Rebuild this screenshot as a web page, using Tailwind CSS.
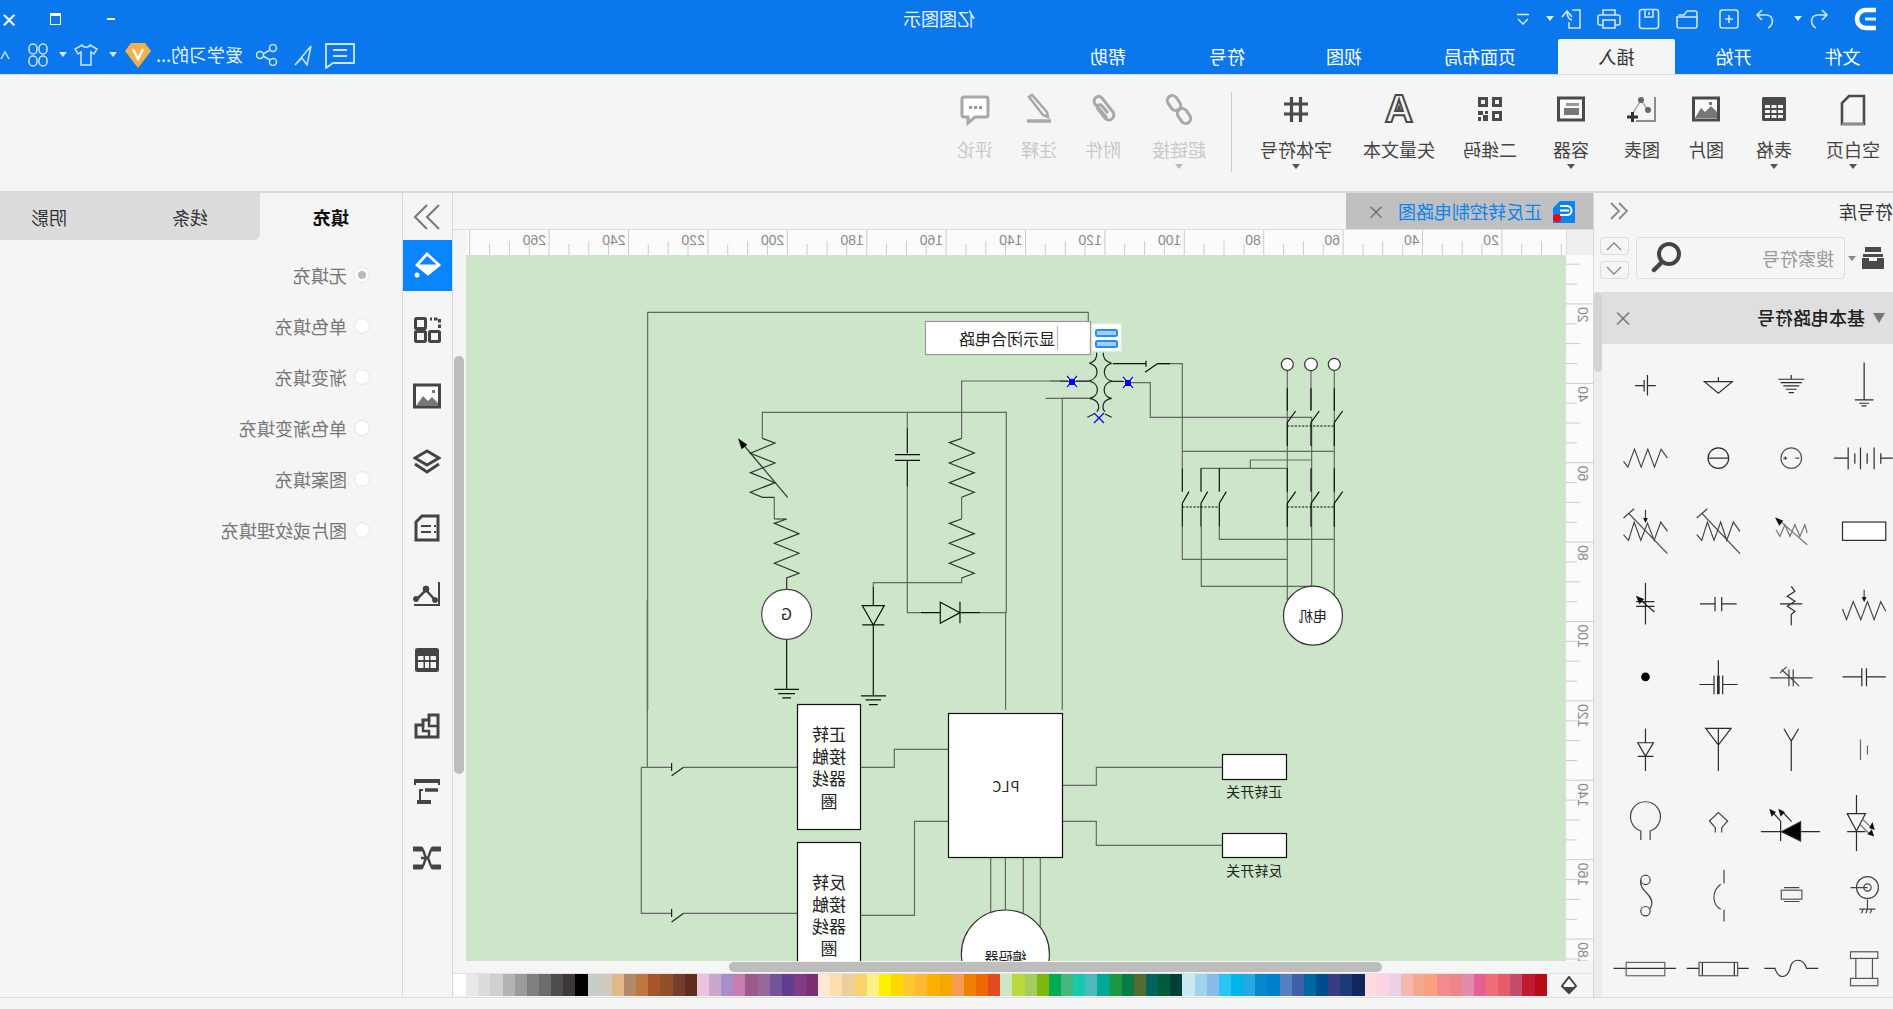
<!DOCTYPE html>
<html lang="zh-CN">
<head>
  <meta charset="UTF-8" />
  <title>亿图图示</title>
  <script src="https://cdn.jsdelivr.net/npm/@tailwindcss/browser@4"></script>
</head>
<body class="overflow-hidden bg-[#f5f5f5]">
<!-- the whole window is shown mirrored, so the DOM is written in normal reading order -->
<div class="-scale-x-100 w-[1893px] h-[1009px] flex flex-col overflow-hidden bg-[#f5f5f5] text-[#444] font-['Noto_Sans_CJK_SC',sans-serif]">

  <!-- title bar -->
  <header class="h-[74px] bg-[#0a78ec] text-white flex flex-col shrink-0">
    <div class="h-[37px] flex items-center pl-[17px]">
      <svg class="-scale-x-100 w-[22px] h-[24px] shrink-0" viewBox="0 0 22 24" fill="none" stroke="#fff"><path d="M22 3H12a9 9 0 0 0 0 18H22" stroke-width="4.5"/><path d="M11 12H22" stroke-width="3" stroke="#dcecff"/></svg>
      <svg class="-scale-x-100 ml-[24px] w-[22px] h-[22px] shrink-0" viewBox="0 0 22 22" fill="none" stroke="#cfe3fb" stroke-width="1.6"><path d="M8 20C2 17 2 8 9 7H19M14 2L19 7L14 12"/></svg>
      <svg class="ml-[6px] w-[8px] h-[5px] shrink-0" viewBox="0 0 8 5" fill="#dcecff"><path d="M0 0H8L4 5Z"/></svg>
      <svg class="-scale-x-100 ml-[18px] w-[22px] h-[22px] shrink-0" viewBox="0 0 22 22" fill="none" stroke="#cfe3fb" stroke-width="1.6"><path d="M14 20C20 17 20 8 13 7H3M8 2L3 7L8 12"/></svg>
      <svg class="ml-[14px] w-[22px] h-[22px] shrink-0" viewBox="0 0 22 22" fill="none" stroke="#cfe3fb" stroke-width="1.6"><rect x="2" y="2" width="18" height="18" rx="2.5"/><path d="M7 11H15M11 7V15"/></svg>
      <svg class="-scale-x-100 ml-[19px] w-[24px] h-[22px] shrink-0" viewBox="0 0 24 22" fill="none" stroke="#cfe3fb" stroke-width="1.6"><path d="M2 8V18a2 2 0 0 0 2 2H20a2 2 0 0 0 2-2V5a2 2 0 0 0-2-2H12L9 7H3"/><path d="M2 9H22"/></svg>
      <svg class="ml-[15px] w-[22px] h-[22px] shrink-0" viewBox="0 0 22 22" fill="none" stroke="#cfe3fb" stroke-width="1.6"><rect x="1.5" y="1.5" width="19" height="19" rx="2.5"/><path d="M7 2V9H15V2M11 4V7"/></svg>
      <svg class="ml-[17px] w-[24px] h-[22px] shrink-0" viewBox="0 0 24 22" fill="none" stroke="#cfe3fb" stroke-width="1.6"><path d="M6 7V2H18V7M6 17H3a2 2 0 0 1-2-2V9a2 2 0 0 1 2-2H21a2 2 0 0 1 2 2V15a2 2 0 0 1-2 2H18"/><rect x="6" y="12" width="12" height="8"/></svg>
      <svg class="-scale-x-100 ml-[15px] w-[22px] h-[22px] shrink-0" viewBox="0 0 22 22" fill="none" stroke="#cfe3fb" stroke-width="1.6"><path d="M12 2H20V20H9V14M2 9L7 3L12 9M7 3C7 8 8 11 12 12"/></svg>
      <svg class="ml-[6px] w-[8px] h-[5px] shrink-0" viewBox="0 0 8 5" fill="#dcecff"><path d="M0 0H8L4 5Z"/></svg>
      <svg class="ml-[17px] w-[12px] h-[12px] shrink-0" viewBox="0 0 12 12" fill="none" stroke="#dcecff" stroke-width="1.4"><path d="M0 1.5H12M1 6L6 11L11 6"/></svg>
      <div class="flex-1 text-center pr-[226px] text-[18px] text-[#e8f2ff]">亿图图示</div>
      <div class="w-[135px] flex items-center shrink-0">
        <div class="w-[54px] flex justify-center"><div class="w-[8px] h-[2px] bg-white"></div></div>
        <div class="w-[73px] flex justify-center"><div class="w-[11px] h-[12px] border border-white border-t-[3px]"></div></div>
        <div class="flex-1 pl-[5px] text-[18px] leading-none font-bold">×</div>
      </div>
    </div>
    <div class="h-[37px] flex items-end">
      <div class="w-[101px] h-[35px] flex items-center justify-center text-[18px]">文件</div>
      <div class="w-[117px] h-[35px] flex items-center justify-center text-[18px]">开始</div>
      <div class="w-[117px] h-[35px] flex items-center justify-center text-[18px] bg-[#f5f5f5] text-[#333] rounded-t-[2px]">插入</div>
      <div class="w-[156px] h-[35px] flex items-center justify-center text-[18px]">页面布局</div>
      <div class="w-[116px] h-[35px] flex items-center justify-center text-[18px]">视图</div>
      <div class="w-[118px] h-[35px] flex items-center justify-center text-[18px]">符号</div>
      <div class="w-[120px] h-[35px] flex items-center justify-center text-[18px]">帮助</div>
      <div class="ml-auto h-[37px] flex items-center pb-[2px]">
        <svg class="-scale-x-100 w-[30px] h-[28px]" viewBox="0 0 30 28" fill="none" stroke="#cfe3fb" stroke-width="1.8"><path d="M1 3H29V22H8L1 27Z"/><path d="M8 9H22M8 15H22"/></svg>
        <svg class="-scale-x-100 ml-[12px] w-[20px] h-[22px]" viewBox="0 0 20 22" fill="none" stroke="#cfe3fb" stroke-width="1.5"><path d="M2 21L18 2L14 21L9 14Z"/></svg>
        <svg class="ml-[15px] w-[22px] h-[22px]" viewBox="0 0 22 22" fill="none" stroke="#cfe3fb" stroke-width="1.5"><circle cx="5" cy="4" r="3.5"/><circle cx="18" cy="11" r="3.5"/><circle cx="5" cy="18" r="3.5"/><path d="M8 6L15 10M8 16L15 12"/></svg>
        <div class="ml-[13px] w-[86px] text-[18px] whitespace-nowrap text-[#eaf3ff]">爱学习的...</div>
        <svg class="ml-[6px] w-[26px] h-[26px]" viewBox="0 0 26 26"><path d="M6 1H20L26 9L13 26L0 9Z" fill="#f5b04a"/><path d="M8 7L13 17L18 7" fill="none" stroke="#fff" stroke-width="2.5"/></svg>
        <svg class="ml-[8px] w-[8px] h-[5px]" viewBox="0 0 8 5" fill="#dcecff"><path d="M0 0H8L4 5Z"/></svg>
        <svg class="ml-[11px] w-[24px] h-[24px]" viewBox="0 0 24 24" fill="none" stroke="#cfe3fb" stroke-width="1.5"><path d="M8 2L1 6L4 11L7 9V22H17V9L20 11L23 6L16 2C15 5 9 5 8 2Z"/></svg>
        <svg class="ml-[7px] w-[8px] h-[5px]" viewBox="0 0 8 5" fill="#dcecff"><path d="M0 0H8L4 5Z"/></svg>
        <svg class="ml-[11px] w-[20px] h-[24px]" viewBox="0 0 20 24" fill="none" stroke="#cfe3fb" stroke-width="1.5"><rect x="1" y="1" width="8" height="10" rx="4"/><rect x="11" y="1" width="8" height="10" rx="4"/><rect x="1" y="13" width="8" height="10" rx="4"/><rect x="11" y="13" width="8" height="10" rx="4"/></svg>
        <svg class="ml-[18px] w-[10px] h-[12px]" viewBox="0 0 10 12" fill="none" stroke="#cfe3fb" stroke-width="1.5"><path d="M1 10L5 3L9 10"/></svg>
      </div>
    </div>
  </header>

  <!-- ribbon -->
  <section class="h-[119px] shrink-0 flex border-t border-b-2 border-t-[#dcdcdc] border-b-[#d9d9d9] text-[18px] leading-[24px] text-[#444]">
    <div class="w-[80px] flex flex-col items-center pt-[17px]">
      <svg class="-scale-x-100 w-[26px] h-[34px]" viewBox="0 0 26 34" fill="none" stroke="#4a4a4a" stroke-width="2.6"><path d="M9 4H24V32H2V11Z"/><path d="M2 32H24" stroke="#8c8c8c"/></svg>
      <span class="mt-[11px]">空白页</span><svg class="mt-[3px] w-[8px] h-[5px]" viewBox="0 0 8 5" fill="#555"><path d="M0 0H8L4 5Z"/></svg>
    </div>
    <div class="w-[78px] flex flex-col items-center pt-[17px]">
      <svg class="w-[26px] h-[34px]" viewBox="0 0 26 34"><rect x="1" y="5" width="24" height="24" rx="1.5" fill="#4a4a4a"/><path d="M4 13H9V16H4ZM10.500 13H15.500V16H10.500ZM17 13H22V16H17ZM4 18H9V21H4ZM10.500 18H15.500V21H10.500ZM17 18H22V21H17ZM4 23H9V26H4ZM10.500 23H15.500V26H10.500ZM17 23H22V26H17Z" fill="#f5f5f5"/></svg>
      <span class="mt-[11px]">表格</span><svg class="mt-[3px] w-[8px] h-[5px]" viewBox="0 0 8 5" fill="#555"><path d="M0 0H8L4 5Z"/></svg>
    </div>
    <div class="w-[58px] flex flex-col items-center pt-[17px]">
      <svg class="-scale-x-100 w-[28px] h-[34px]" viewBox="0 0 28 34"><rect x="1.500" y="6" width="25" height="22" fill="#fafafa" stroke="#4a4a4a" stroke-width="3"/><path d="M3 26L9 16L13 20L19 14L25 20V26Z" fill="#777"/><rect x="17" y="10" width="3" height="3" fill="#777"/></svg>
      <span class="mt-[11px]">图片</span>
    </div>
    <div class="w-[70px] flex flex-col items-center pt-[17px]">
      <svg class="-scale-x-100 w-[32px] h-[34px]" viewBox="0 0 32 34" fill="none"><path d="M29 5V29H10" stroke="#8c8c8c" stroke-width="2"/><path d="M7 21L15 8L22 18" stroke="#aaa" stroke-width="1.5"/><circle cx="15" cy="8" r="3" fill="#666"/><circle cx="22" cy="18" r="3" fill="#666"/><path d="M1 25H12M6.500 20V30" stroke="#333" stroke-width="3"/></svg>
      <span class="mt-[11px]">图表</span>
    </div>
    <div class="w-[72px] flex flex-col items-center pt-[17px]">
      <svg class="-scale-x-100 w-[28px] h-[34px]" viewBox="0 0 28 34"><rect x="1.500" y="6" width="25" height="22" fill="#fafafa" stroke="#4a4a4a" stroke-width="3"/><rect x="7" y="16" width="15" height="7" fill="#777"/><rect x="9" y="11" width="13" height="3" fill="#999"/></svg>
      <span class="mt-[11px]">容器</span><svg class="mt-[3px] w-[8px] h-[5px]" viewBox="0 0 8 5" fill="#555"><path d="M0 0H8L4 5Z"/></svg>
    </div>
    <div class="w-[90px] flex flex-col items-center pt-[17px]">
      <svg class="-scale-x-100 w-[26px] h-[34px]" viewBox="0 0 26 34"><path d="M1 5H11V15H1ZM15 5H25V15H15ZM15 19H25V29H15ZM1 19H6V23H1ZM6 23H11V29H6ZM1 25H4V29H1ZM8 19H11V22H8Z" fill="#4a4a4a"/><path d="M4 8H8V12H4ZM18 8H22V12H18ZM18 22H22V26H18Z" fill="#f5f5f5"/></svg>
      <span class="mt-[11px]">二维码</span>
    </div>
    <div class="w-[92px] flex flex-col items-center pt-[17px]">
      <svg class="w-[36px] h-[34px] overflow-visible" viewBox="0 0 36 34"><text x="18" y="30" text-anchor="middle" font-family="Liberation Sans" font-weight="700" font-size="39" fill="#f5f5f5" stroke="#4a4a4a" stroke-width="2">A</text><path d="M18 12L21 20H15Z" fill="#4a4a4a"/></svg>
      <span class="mt-[11px] whitespace-nowrap">矢量文本</span>
    </div>
    <div class="w-[114px] flex flex-col items-center pt-[17px]">
      <svg class="w-[26px] h-[34px]" viewBox="0 0 26 34" fill="none" stroke="#4a4a4a" stroke-width="3.2"><path d="M1 12H25M1 22H25M8.500 5V30M17.500 5V30"/></svg>
      <span class="mt-[11px] whitespace-nowrap">字体符号</span><svg class="mt-[3px] w-[8px] h-[5px]" viewBox="0 0 8 5" fill="#555"><path d="M0 0H8L4 5Z"/></svg>
    </div>
    <div class="w-[8px] flex items-center justify-end"><div class="w-px h-[80px] bg-[#ccc] mt-[-3px]"></div></div>
    <div class="w-[104px] flex flex-col items-center pt-[17px] text-[#c8c8c8]">
      <svg class="-scale-x-100 w-[30px] h-[34px]" viewBox="0 0 30 34" fill="none" stroke="#a8a8a8" stroke-width="3"><rect x="-8" y="-5" width="16" height="10" rx="5" transform="translate(10 11) rotate(55)"/><rect x="-8" y="-5" width="16" height="10" rx="5" transform="translate(20 24) rotate(55)"/></svg>
      <span class="mt-[11px] whitespace-nowrap">超链接</span><svg class="mt-[3px] w-[8px] h-[5px]" viewBox="0 0 8 5" fill="#bbb"><path d="M0 0H8L4 5Z"/></svg>
    </div>
    <div class="w-[48px] flex flex-col items-center pt-[17px] text-[#c8c8c8]">
      <svg class="-scale-x-100 w-[30px] h-[34px]" viewBox="0 0 30 34" fill="none" stroke="#a8a8a8" stroke-width="3"><path d="M19 26L7 12C4 7 10 2 14 6L25 20C28 26 21 31 17 26L10 17C8 14 12 11 14 14L20 21"/></svg>
      <span class="mt-[11px]">附件</span>
    </div>
    <div class="w-[80px] flex flex-col items-center pt-[17px] text-[#c8c8c8]">
      <svg class="-scale-x-100 w-[30px] h-[34px]" viewBox="0 0 30 34" fill="none" stroke="#a8a8a8"><path d="M5 5L8 3L23 20L24 25L19 23Z" stroke-width="2.5"/><path d="M3 29H27" stroke-width="3.5"/></svg>
      <span class="mt-[11px]">注释</span>
    </div>
    <div class="w-[48px] flex flex-col items-center pt-[17px] text-[#c8c8c8]">
      <svg class="-scale-x-100 w-[30px] h-[34px]" viewBox="0 0 30 34"><path d="M4 5H26a2 2 0 0 1 2 2V23a2 2 0 0 1-2 2H15L8 31V25H4a2 2 0 0 1-2-2V7a2 2 0 0 1 2-2Z" fill="#fff" stroke="#a8a8a8" stroke-width="3"/><path d="M9 14H12V17H9ZM14 14H17V17H14ZM19 14H22V17H19Z" fill="#999"/></svg>
      <span class="mt-[11px]">评论</span>
    </div>
  </section>

  <main class="flex-1 flex min-h-0">

    <!-- symbol library -->
    <aside class="w-[300px] shrink-0 border-r border-[#d9d9d9] flex flex-col">
      <div class="h-[36px] flex items-center justify-between pr-[15px] text-[18px] text-[#333]">
        <span>符号库</span>
        <svg class="w-[20px] h-[20px]" viewBox="0 0 20 20" fill="none" stroke="#888" stroke-width="1.800"><path d="M10 2L2 10L10 18M18 2L10 10L18 18"/></svg>
      </div>
      <div class="h-[63px] flex items-start pt-[8px] pl-[9px]">
        <svg class="w-[22px] h-[24px] mt-[9px]" viewBox="0 0 22 24"><path d="M3 1H19V6H3ZM1 8H21V11H1ZM0 12H7V15H15V12H22V23H0Z" fill="#4a4a4a"/></svg>
        <svg class="ml-[6px] mt-[19px] w-[8px] h-[5px]" viewBox="0 0 8 5" fill="#888"><path d="M0 0H8L4 5Z"/></svg>
        <div class="ml-[3px] w-[209px] h-[42px] border border-[#ddd] rounded-[3px] flex items-center justify-between pl-[10px] pr-[14px] text-[18px] text-[#999]">
          <span>搜索符号</span>
          <svg class="-scale-x-100 w-[32px] h-[32px]" viewBox="0 0 32 32" fill="none" stroke="#444"><circle cx="18" cy="12" r="10" stroke-width="4"/><path d="M11 20L3 28" stroke-width="4.500" stroke-linecap="round"/></svg>
        </div>
        <div class="ml-[7px] flex flex-col gap-[6px]">
          <div class="w-[29px] h-[18px] border border-[#ddd] rounded-[3px] flex items-center justify-center"><svg class="w-[16px] h-[9px]" viewBox="0 0 16 9" fill="none" stroke="#888" stroke-width="1.300"><path d="M1 8L8 1L15 8"/></svg></div>
          <div class="w-[29px] h-[18px] border border-[#ddd] rounded-[3px] flex items-center justify-center"><svg class="w-[16px] h-[9px]" viewBox="0 0 16 9" fill="none" stroke="#888" stroke-width="1.300"><path d="M1 1L8 8L15 1"/></svg></div>
        </div>
      </div>
      <div class="flex-1 flex min-h-0">
        <div class="w-[291px] flex flex-col">
          <div class="h-[52px] bg-[#dfdfdf] flex items-center pl-[8px] pr-[11px] text-[18px] text-[#222]">
            <svg class="w-[12px] h-[10px]" viewBox="0 0 12 10" fill="#777"><path d="M0 0H12L6 10Z"/></svg>
            <span class="ml-[8px] font-medium">基本电路符号</span>
            <span class="ml-auto text-[#777] text-[20px]">×</span>
          </div>
          <svg class="-scale-x-100 block" width="291" height="654" viewBox="1602 344 291 654" fill="none" stroke="#2b2b2b" stroke-width="1.200">
            <g transform="translate(1590 190) scale(.3333)" stroke-width="3.600">
              <path d="M823 518V630M795 630H851M808 640H838M815 648H830"/>
              <path d="M604 555V568M565 568H643M572 578H636M580 588H628M588 598H620M596 608H612"/>
              <path d="M385 562V575M343 575H427L385 610Z"/>
              <path d="M135 587H162M162 570V605M172 555V617M172 587H197"/>
              <path d="M732 805H775M775 773V838M795 790V822M812 773V838M832 790V822M853 773V838M873 790V822M873 805H909"/>
              <circle cx="604" cy="805" r="31" stroke="#555"/><path d="M580 805H592M586 800V810M616 805H628" stroke-width="3"/>
              <circle cx="385" cy="805" r="31"/><path d="M354 805H416"/>
              <path d="M100 815L113 832L133 778L153 832L173 778L193 832L213 778L232 805" stroke="#444"/>
              <rect x="758" y="997" width="130" height="55" fill="#fff"/>
              <path d="M558 1020L570 1040L585 1005L600 1040L615 1005L630 1040L645 1005L652 1030M560 985L652 1065" stroke="#777"/><path d="M555 983L580 993L568 1008Z" fill="#111" stroke="none"/>
              <path d="M320 1035L335 1052L352 997L372 1052L392 997L410 1052L430 997L450 1025M335 970L450 1092M320 985L352 957" stroke="#444"/>
              <path d="M100 1035L115 1052L132 997L152 1052L172 1000L192 1052L212 997L232 1025M115 970L232 1092M100 985L132 957M166 960V990" stroke="#444"/><path d="M159 985H173L166 1000Z" fill="#111" stroke="none"/>
            </g>
            <g transform="translate(1590 590) scale(.3333)" stroke-width="3.600">
              <path d="M758 58L770 90L790 36L813 90L833 36L853 90L873 36L888 65M823 0V25" stroke="#444"/><path d="M816 22H830L823 38Z" fill="#111" stroke="none"/>
              <path d="M604 -10L615 5L592 20L615 35L592 50L615 65L604 75V107M570 43H637"/>
              <path d="M330 43H375M375 22V65M395 22V65M395 43H440"/>
              <path d="M166 -20V105M138 36H193M138 50H193M193 67L145 26"/><path d="M137 18L162 28L148 44Z" fill="#111" stroke="none"/>
              <path d="M758 262H816M816 236V290M830 236V290M830 262H888"/>
              <path d="M540 265H668M597 240V290M610 240V290M575 240L628 290M570 250L590 232" stroke="#444"/>
              <path d="M385 212V258M372 258V314M398 258V314M328 285H372M398 285H443"/><path d="M385 258V314" stroke-width="8"/>
              <circle cx="166" cy="262" r="13" fill="#000" stroke="none"/>
              <path d="M812 450V512M833 468V495" stroke="#666"/>
              <path d="M604 450V545M582 418L604 455L626 418"/>
              <path d="M347 417H423L385 467ZM385 417V545"/>
              <path d="M166 418V460M143 460H190L166 500ZM143 501H190M166 501V545"/>
              <path d="M800 617V672M772 673H827L800 725ZM772 727H827M800 727V785"/><path d="M818 690L842 712M810 705L840 735" stroke="#777"/><path d="M855 722L838 716L848 698ZM853 742L833 735L846 720Z" fill="#111" stroke="none"/>
              <path d="M513 727H690M572 695V755M572 695L545 665M605 697L575 665" stroke-width="3.600"/><path d="M632 697V755L575 727Z" fill="#000"/><path d="M538 658L558 668L545 682ZM565 658L585 668L572 682Z" fill="#111" stroke="none"/>
              <path d="M152 752V725A45 45 0 1 1 180 725V752" stroke="#444"/>
              <path d="M376 730V715L358 695L385 670L413 695L395 715V730" stroke="#444"/>
              <circle cx="833" cy="895" r="33" stroke="#444"/><circle cx="833" cy="895" r="11" stroke="#444"/><path d="M782 895H833M833 930V958M808 960H857M820 960L815 972M833 960L828 972M846 960L841 972" stroke="#444"/>
              <rect x="574" y="903" width="62" height="27" stroke="#555"/><path d="M582 895H628M582 937H628" stroke="#444"/>
              <path d="M402 842V882M392 885C360 910 370 950 392 960M402 962V997" stroke="#444"/>
              <circle cx="166" cy="872" r="14" stroke="#444"/><circle cx="166" cy="966" r="14" stroke="#444"/><path d="M152 872C145 905 190 915 185 945C183 955 180 960 176 958" stroke="#444"/>
              <rect x="782" y="1088" width="82" height="20" stroke="#555"/><rect x="782" y="1168" width="82" height="22" stroke="#555"/><path d="M798 1108V1168M848 1108V1168" stroke="#555"/>
              <path d="M523 1138H555C565 1170 590 1170 600 1140C605 1105 640 1105 650 1138H685" stroke="#333"/>
              <path d="M290 1138H327M443 1138H476M337 1120V1160M433 1120V1160"/><rect x="327" y="1120" width="116" height="40" stroke="#555"/>
              <path d="M70 1138H258" stroke="#333"/><rect x="108" y="1120" width="116" height="40" stroke="#666"/>
            </g>
          </svg>
        </div>
        <div class="w-[8px] bg-[#ececec]"><div class="h-[80px] rounded-[4px] bg-[#d4d4d4]"></div></div>
      </div>
    </aside>

    <!-- canvas column -->
    <section class="w-[1140px] shrink-0 flex flex-col">
      <div class="h-[36px] flex shrink-0">
        <div class="w-[247px] bg-[#c0c0c0] flex items-center pl-[18px] text-[18px] text-[#0a84f0]">
          <svg class="w-[22px] h-[24px]" viewBox="0 0 22 24"><path d="M0 2H15L22 9V24H0Z" fill="#0a84f0"/><path d="M15 7H8a4 4 0 0 0 0 9H15M6 11.500H15" fill="none" stroke="#fff" stroke-width="2"/><circle cx="18" cy="19" r="4" fill="#f00"/></svg>
          <span class="ml-[11px] whitespace-nowrap">正反转控制电路图</span>
          <span class="ml-[13px] text-[#666] text-[18px]">×</span>
        </div>
      </div>
      <div class="h-[26px] flex shrink-0 border-t border-[#ddd]">
        <div class="w-[27px] shrink-0 bg-[#efefef] border-r border-[#ddd]"></div>
        <svg id="h-ruler" class="block shrink-0 bg-[#fbfbfb]" width="1100" height="25" viewBox="0 0 1100 25"></svg>
      </div>
      <div class="h-[706px] flex shrink-0">
        <svg id="v-ruler" class="block bg-[#fbfbfb] shrink-0" width="27" height="706" viewBox="0 0 27 706"></svg>
        <svg class="-scale-x-100 block bg-[#cde5c8] shrink-0" width="1100" height="706" viewBox="466 255 1100 706" fill="none" stroke="#666" stroke-width="1.200">
          <!-- wires, left half of the drawing -->
          <g transform="translate(600 290) scale(.3333)" stroke-width="3.600">
            <path d="M143 1260V67H1465V95"/>
            <path d="M487 445V367H1219V968H1140M1217 968V1260"/>
            <path d="M922 367V415M922 590V968H963M1085 445V273H1465M1387 1260V325H1465"/>
            <path d="M1085 622V687M1085 864V878H820V890M523 622V687"/>
            <g stroke="#333">
              <path d="M487 445L525 459L451 490L525 519L451 548L525 578L451 607L487 622H523M523 687H560L523 700L597 731L523 760L597 790L523 820L597 850L560 864V898"/>
              <path d="M1085 445L1048 458L1123 489L1048 519L1123 548L1048 578L1123 607L1085 622M1085 687L1048 700L1123 731L1048 760L1123 790L1048 820L1123 850L1085 864"/>
              <path d="M563 622L428 462"/>
            </g>
            <path d="M414 445L442 464L425 478Z" fill="#000" stroke="none"/>
            <g stroke="#111">
              <path d="M922 415V490M885 494H960M885 511H960M922 511V590"/>
              <path d="M820 890V947M787 947H853L820 1005ZM787 1005H853M820 1005V1218M783 1218H858M797 1230H843M807 1244H833"/>
              <path d="M963 968H1021M1021 937V1000L1080 968ZM1080 935V1000M1080 968H1140"/>
              <path d="M560 1048V1198M523 1198H597M535 1211H585M547 1224H573"/>
            </g>
            <circle cx="560" cy="973" r="75" fill="#fff" stroke="#444"/>
          </g>
          <!-- power circuit, right half -->
          <g transform="translate(1050 290) scale(.3333)" stroke-width="3.600">
            <path d="M322 221H397V535M235 278H301V382H785V888M397 484H853M453 535H712M601 535V510H785M712 241V930M853 241V915M508 710V748H853M397 710V808H712M454 710V889H785M783 241V360"/>
            <g stroke="#111">
              <path d="M188 221H288M288 212V230M285 247L322 221M322 221H360"/>
              <path d="M712 295V362M783 295V362M853 295V362M712 397L737 363M783 397L808 363M853 397L878 363M712 397V468M783 397V468M853 397V468"/>
              <path d="M712 408H853" stroke-dasharray="7 4"/>
              <path d="M712 535V605M783 535V605M853 535V605M712 640L737 605M783 640L808 605M853 640L878 605M712 640V710M783 640V710M853 640V710"/>
              <path d="M712 651H853" stroke-dasharray="7 4"/>
              <path d="M397 535V605M453 535V605M508 535V605M397 640L417 605M453 640L473 605M508 640L529 605M397 640V710M453 640V710M508 640V710"/>
              <path d="M397 651H508" stroke-dasharray="7 4"/>
            </g>
            <g fill="#fff" stroke="#333">
              <circle cx="712" cy="223" r="18"/><circle cx="783" cy="223" r="19"/><circle cx="853" cy="223" r="18"/>
              <circle cx="789" cy="977" r="88.500"/>
            </g>
            <!-- transformer coils -->
            <path d="M118 220C150 225 150 268 112 274H30M118 325C150 320 150 280 120 274M118 220C135 215 142 205 140 188M118 325C150 330 150 355 140 365M112 382L132 372" stroke="#222" />
            <path d="M185 220C155 225 155 268 188 274H235M185 325C155 320 155 280 185 274M185 220C168 215 158 205 160 188M185 325C155 330 155 355 165 365M165 372L185 382" stroke="#222"/>
            <path d="M0 273H112M-13 325H118" stroke="#666"/>
          </g>
          <!-- control circuit -->
          <path d="M647.300 767.300V600M641.300 767.300H671.600M683.600 767.300H797.400M641.300 767.300V913.300H671.600M683.600 913.300H797.400"/>
          <path d="M671.600 763V771M671.600 909V917M671.600 775.700L683.600 767.300M671.600 922L683.600 913.300" stroke="#222"/>
          <path d="M860.300 767.300H894.300V749.300H948.500M860.300 915.300H914.500V821.300H948.500M1062.400 785.300H1096.300V767.300H1222M1062.400 821.300H1096.300V845.300H1222"/>
          <path d="M990.700 857V913M1005.400 857V911M1023.300 857V913M1040.300 857V926"/>
          <g fill="#fff" stroke="#111">
            <rect x="797.500" y="704.500" width="63" height="125"/>
            <rect x="797.500" y="842.500" width="63" height="140"/>
            <rect x="948.500" y="713.500" width="114" height="144"/>
            <rect x="1222.500" y="754.500" width="64" height="25"/>
            <rect x="1222.500" y="833.500" width="64" height="24"/>
          </g>
          <circle cx="1005.400" cy="954" r="44" fill="#fff" stroke="#333"/>
          <!-- selected text box and handles -->
          <rect x="925.500" y="321.500" width="165" height="33" fill="#fff" stroke="#999"/>
          <path d="M1057.500 326V350" stroke="#bbb"/>
          <rect x="1092" y="324" width="29" height="27" fill="#fff" stroke="#eee"/>
          <g fill="#a8cdf5" stroke="#1e90ff" stroke-width="2">
            <rect x="1096" y="330" width="21" height="6" rx="1.500"/><rect x="1096" y="341" width="21" height="6" rx="1.500"/>
          </g>
          <g stroke="#fff" stroke-width="3">
            <path d="M1067 377L1077 387M1077 377L1067 387M1123 378L1133 388M1133 378L1123 388"/>
          </g>
          <path d="M1067 376L1077 387M1077 376L1067 387M1123 377L1133 388M1133 377L1123 388M1094 413L1104 423M1104 413L1094 423" stroke="#00f"/>
          <path d="M1069 379H1075V385H1069ZM1125 380H1131V386H1125Z" fill="#00f" stroke="none"/>
          <!-- labels -->
          <g fill="#222" stroke="none" text-anchor="middle" font-size="16">
            <text transform="translate(1007 345) scale(-1 1)">显示闭合电路</text>
            <text transform="translate(786.500 620) scale(-1 1)" font-size="16">G</text>
            <text transform="translate(1313 621) scale(-1 1)" font-size="14">电机</text>
            <text transform="translate(1005.400 792) scale(-1 1)" font-size="14" letter-spacing="1">PLC</text>
            <text transform="translate(829 741) scale(-1 1)" font-size="17">正转</text>
            <text transform="translate(829 763) scale(-1 1)" font-size="17">接触</text>
            <text transform="translate(829 785) scale(-1 1)" font-size="17">器线</text>
            <text transform="translate(829 808) scale(-1 1)" font-size="17">圈</text>
            <text transform="translate(829 889) scale(-1 1)" font-size="17">反转</text>
            <text transform="translate(829 911) scale(-1 1)" font-size="17">接触</text>
            <text transform="translate(829 933) scale(-1 1)" font-size="17">器线</text>
            <text transform="translate(829 955) scale(-1 1)" font-size="17">圈</text>
            <text transform="translate(1005.400 962) scale(-1 1)" font-size="14">编码器</text>
            <text transform="translate(1254.300 797) scale(-1 1)" font-size="14">正转开关</text>
            <text transform="translate(1254.300 876) scale(-1 1)" font-size="14">反转开关</text>
          </g>
        </svg>
        <div class="flex-1 bg-[#f5f5f5] pl-[2px] pt-[101px]"><div class="w-[10px] h-[418px] rounded-[5px] bg-[#bdbdbd]"></div></div>
      </div>
      <div class="h-[13px] shrink-0 pl-[211px] pt-[1px] border-b border-[#e3e3e3]"><div class="w-[653px] h-[10px] rounded-[5px] bg-[#bdbdbd]"></div></div>
      <div class="flex-1 flex items-start">
        <div class="w-[47px] shrink-0 flex justify-center pt-[2px]">
          <svg class="-scale-x-100 w-[16px] h-[20px]" viewBox="0 0 16 20"><path d="M8 1L15 10L8 17L1 10Z" fill="#fff" stroke="#444" stroke-width="2"/><path d="M3 11H13L8 17Z" fill="#444"/></svg>
        </div>
        <div id="palette" class="flex flex-row-reverse shrink-0 w-[1092px] h-[22px]"></div>
      </div>
    </section>

    <!-- vertical tool strip -->
    <nav class="w-[51px] shrink-0 border-x border-[#d9d9d9] flex flex-col items-center">
      <div class="h-[47px] flex items-center justify-center">
        <svg class="-scale-x-100 w-[28px] h-[26px]" viewBox="0 0 28 26" fill="none" stroke="#777" stroke-width="2"><path d="M14 1L2 13L14 25M26 1L14 13L26 25"/></svg>
      </div>
      <div class="w-full h-[51px] bg-[#0a84ff] flex items-center justify-center">
        <svg class="-scale-x-100 w-[27px] h-[28px]" viewBox="0 0 27 28" fill="none" stroke="#fff" stroke-width="2.800"><path d="M13 2L25 13L14 22L3 13Z"/><path d="M3 13H25L14 22Z" fill="#fff" stroke-width="1"/><circle cx="3" cy="23" r="2.500" fill="#fff" stroke="none"/></svg>
      </div>
      <div class="h-[66px] mt-[6px] flex items-center justify-center">
        <svg class="w-[27px] h-[26px]" viewBox="0 0 27 26" fill="none" stroke="#444" stroke-width="3"><rect x="1.500" y="14.500" width="10" height="10" rx="1"/><rect x="15.500" y="14.500" width="10" height="10" rx="1"/><rect x="15.500" y="1.500" width="10" height="10" rx="1"/><path d="M1.500 11V2H11" stroke-dasharray="3.500 2"/></svg>
      </div>
      <div class="h-[66px] flex items-center justify-center">
        <svg class="-scale-x-100 w-[28px] h-[26px]" viewBox="0 0 28 26"><rect x="1.500" y="2" width="25" height="22" fill="#fff" stroke="#444" stroke-width="3"/><path d="M3 23L10 13L15 18L19 14L25 20V23Z" fill="#777"/><rect x="19" y="7" width="3" height="3" fill="#777"/></svg>
      </div>
      <div class="h-[66px] flex items-center justify-center">
        <svg class="w-[28px] h-[26px]" viewBox="0 0 28 26" fill="none" stroke="#444" stroke-width="3"><path d="M14 2L26 9L14 16L2 9Z"/><path d="M2 15L14 23L26 15"/></svg>
      </div>
      <div class="h-[66px] flex items-center justify-center">
        <svg class="-scale-x-100 w-[26px] h-[28px]" viewBox="0 0 26 28" fill="none" stroke="#444" stroke-width="3"><path d="M8 2H24V26H2V8Z"/><path d="M7 12H17M7 18H17" stroke-width="2"/><path d="M20 12H22M20 18H22" stroke-width="2"/></svg>
      </div>
      <div class="h-[66px] flex items-center justify-center">
        <svg class="-scale-x-100 w-[28px] h-[26px]" viewBox="0 0 28 26" fill="none" stroke="#444"><path d="M26 1V24H1" stroke-width="2"/><path d="M3 19L13 9L22 19" stroke-width="2.500"/><circle cx="3" cy="18" r="2.500" fill="#444"/><circle cx="13" cy="8" r="3" fill="#444"/><circle cx="22" cy="19" r="2.500" fill="#444"/></svg>
      </div>
      <div class="h-[66px] flex items-center justify-center">
        <svg class="w-[26px] h-[26px]" viewBox="0 0 26 26"><rect x="1" y="1" width="24" height="24" rx="2.500" fill="#444"/><path d="M4 9H9.500V13H4ZM11 9H15V13H11ZM16.500 9H22V13H16.500ZM4 15H9.500V21H4ZM11 15H15V21H11ZM16.500 15H22V21H16.500Z" fill="#f5f5f5"/></svg>
      </div>
      <div class="h-[66px] flex items-center justify-center">
        <svg class="-scale-x-100 w-[26px] h-[26px]" viewBox="0 0 26 26" fill="none" stroke="#444" stroke-width="3"><path d="M2 12H9V7H15V2H24V24H2Z"/><path d="M15 7V13H24M9 12V18H15V24" stroke-width="2.500"/></svg>
      </div>
      <div class="h-[66px] flex items-center justify-center">
        <svg class="-scale-x-100 w-[28px] h-[26px]" viewBox="0 0 28 26" fill="none" stroke="#444"><path d="M1 2H27" stroke-width="4"/><path d="M2 2V6M26 2V6" stroke-width="2"/><path d="M12 11H25" stroke-width="3.500"/><path d="M4 23H18" stroke-width="4"/><path d="M10 11H7V21" stroke-width="2"/></svg>
      </div>
      <div class="h-[66px] flex items-center justify-center">
        <svg class="w-[28px] h-[24px]" viewBox="0 0 28 24" fill="none" stroke="#444"><path d="M1 3H8M20 3H27M1 21H8M20 21H27" stroke-width="5" stroke-linecap="round"/><path d="M8 3C12 3 11 12 14 12C17 12 16 3 20 3M8 21C12 21 11 12 14 12C17 12 16 21 20 21" stroke-width="2.500"/><path d="M14 12H20" stroke-width="2.500"/></svg>
      </div>
    </nav>

    <!-- fill properties -->
    <aside class="flex-1 flex flex-col text-[18px] leading-none">
      <div class="h-[47px] flex items-center shrink-0 text-[#111]">
        <div class="w-[142px] h-full flex items-center justify-center font-bold">填充</div>
        <div class="w-[140px] h-full flex items-center justify-center bg-[#dcdcdc] rounded-bl-[6px] text-[#333]">线条</div>
        <div class="flex-1 h-full flex items-center justify-center pl-[22px] bg-[#dcdcdc] text-[#333]">阴影</div>
      </div>
      <div class="pt-[9px] pl-[32px] text-[#777]">
        <div class="h-[51px] flex items-center gap-[7px]"><span class="w-[16px] h-[16px] rounded-full bg-white border border-[#e5e5e5] flex items-center justify-center"><span class="w-[8px] h-[8px] rounded-full bg-[#bbb]"></span></span>无填充</div>
        <div class="h-[51px] flex items-center gap-[7px]"><span class="w-[16px] h-[16px] rounded-full bg-white border border-[#e5e5e5]"></span>单色填充</div>
        <div class="h-[51px] flex items-center gap-[7px]"><span class="w-[16px] h-[16px] rounded-full bg-white border border-[#e5e5e5]"></span>渐变填充</div>
        <div class="h-[51px] flex items-center gap-[7px]"><span class="w-[16px] h-[16px] rounded-full bg-white border border-[#e5e5e5]"></span>单色渐变填充</div>
        <div class="h-[51px] flex items-center gap-[7px]"><span class="w-[16px] h-[16px] rounded-full bg-white border border-[#e5e5e5]"></span>图案填充</div>
        <div class="h-[51px] flex items-center gap-[7px]"><span class="w-[16px] h-[16px] rounded-full bg-white border border-[#e5e5e5]"></span>图片或纹理填充</div>
      </div>
    </aside>
  </main>

  <footer class="h-[12px] shrink-0 border-t border-[#dcdcdc] bg-[#f5f5f5]"></footer>
</div>

<script>
  const svgText = 'font-family="Liberation Sans" font-size="14" fill="#8a8a8a"';

  // horizontal ruler: 20 units are about 79.4px
  let h = '';
  for (let n = 0; n <= 280; n += 5) {
    const x = (-15.3 + 3.97 * n).toFixed(1);
    const top = n % 20 === 0 ? 0 : n % 10 === 0 ? 11 : 14;
    h += `<path d="M${x} ${top}V25" stroke="#ccc"/>`;
    if (n % 20 === 0 && n > 0) h += `<text x="${+x + 3}" y="15" ${svgText}>${n}</text>`;
  }
  document.getElementById('h-ruler').innerHTML = h;

  let v = '';
  for (let n = 10; n <= 185; n += 5) {
    const y = (-30.5 + 3.97 * n).toFixed(1);
    const left = n % 20 === 0 ? 0 : n % 10 === 0 ? 13 : 16;
    v += `<path d="M${left} ${y}H27" stroke="#ccc"/>`;
    if (n % 20 === 0) v += `<text transform="translate(15 ${+y + 3}) rotate(-90)" text-anchor="end" ${svgText}>${n}</text>`;
  }
  document.getElementById('v-ruler').innerHTML = v;

  const colors = ['#ffffff','#e8e8e8','#dcdcdc','#cfcfcf','#b3b3b3','#9b9b9b','#7f7f7f','#6c6c6c','#4f4c4c','#3d3838','#000000',
    '#c5cfc7','#d2c9c2','#e0b88a','#b4886b','#bd7840','#a85428','#905028','#763c30','#5f2d1e',
    '#ecc3dc','#c8a8cc','#a88ccc','#c87cb0','#9c5a8c','#96689c','#74559c','#643c90','#803c84','#7c3074',
    '#fde9d4','#fddcae','#ecd09c','#fdd26b','#fcf084','#fff000','#ffd800','#fdc832','#fdb834','#fdb000','#f4a800','#f49c54','#f08000','#ec6a00','#e44c20',
    '#cce6c8','#bcd83c','#a4cc60','#80b810','#00ac50','#44b87c','#18c8b0','#50b8c0','#00a898','#1c9844','#087c48','#546c30','#00645c','#005c38','#004038',
    '#c8e8f4','#a0d4ec','#88bce8','#2cc4f4','#00b4ec','#28a8e0','#0888cc','#0080cc','#5480c0','#4060a8','#0068a4','#004c90','#383c80','#1c3a78','#10265c',
    '#fddce0','#fcd4e4','#ecd0e4','#f4b8b0','#f4a890','#fca080','#f08c90','#ec8488','#e08cac','#e86090','#ec7078','#e85c68','#c44c6c','#c01c30','#b80c18'];
  const palette = document.getElementById('palette');
  colors.forEach(c => {
    const swatch = document.createElement('div');
    swatch.className = 'flex-1';
    swatch.style.background = c;
    palette.appendChild(swatch);
  });
</script>
</body>
</html>
